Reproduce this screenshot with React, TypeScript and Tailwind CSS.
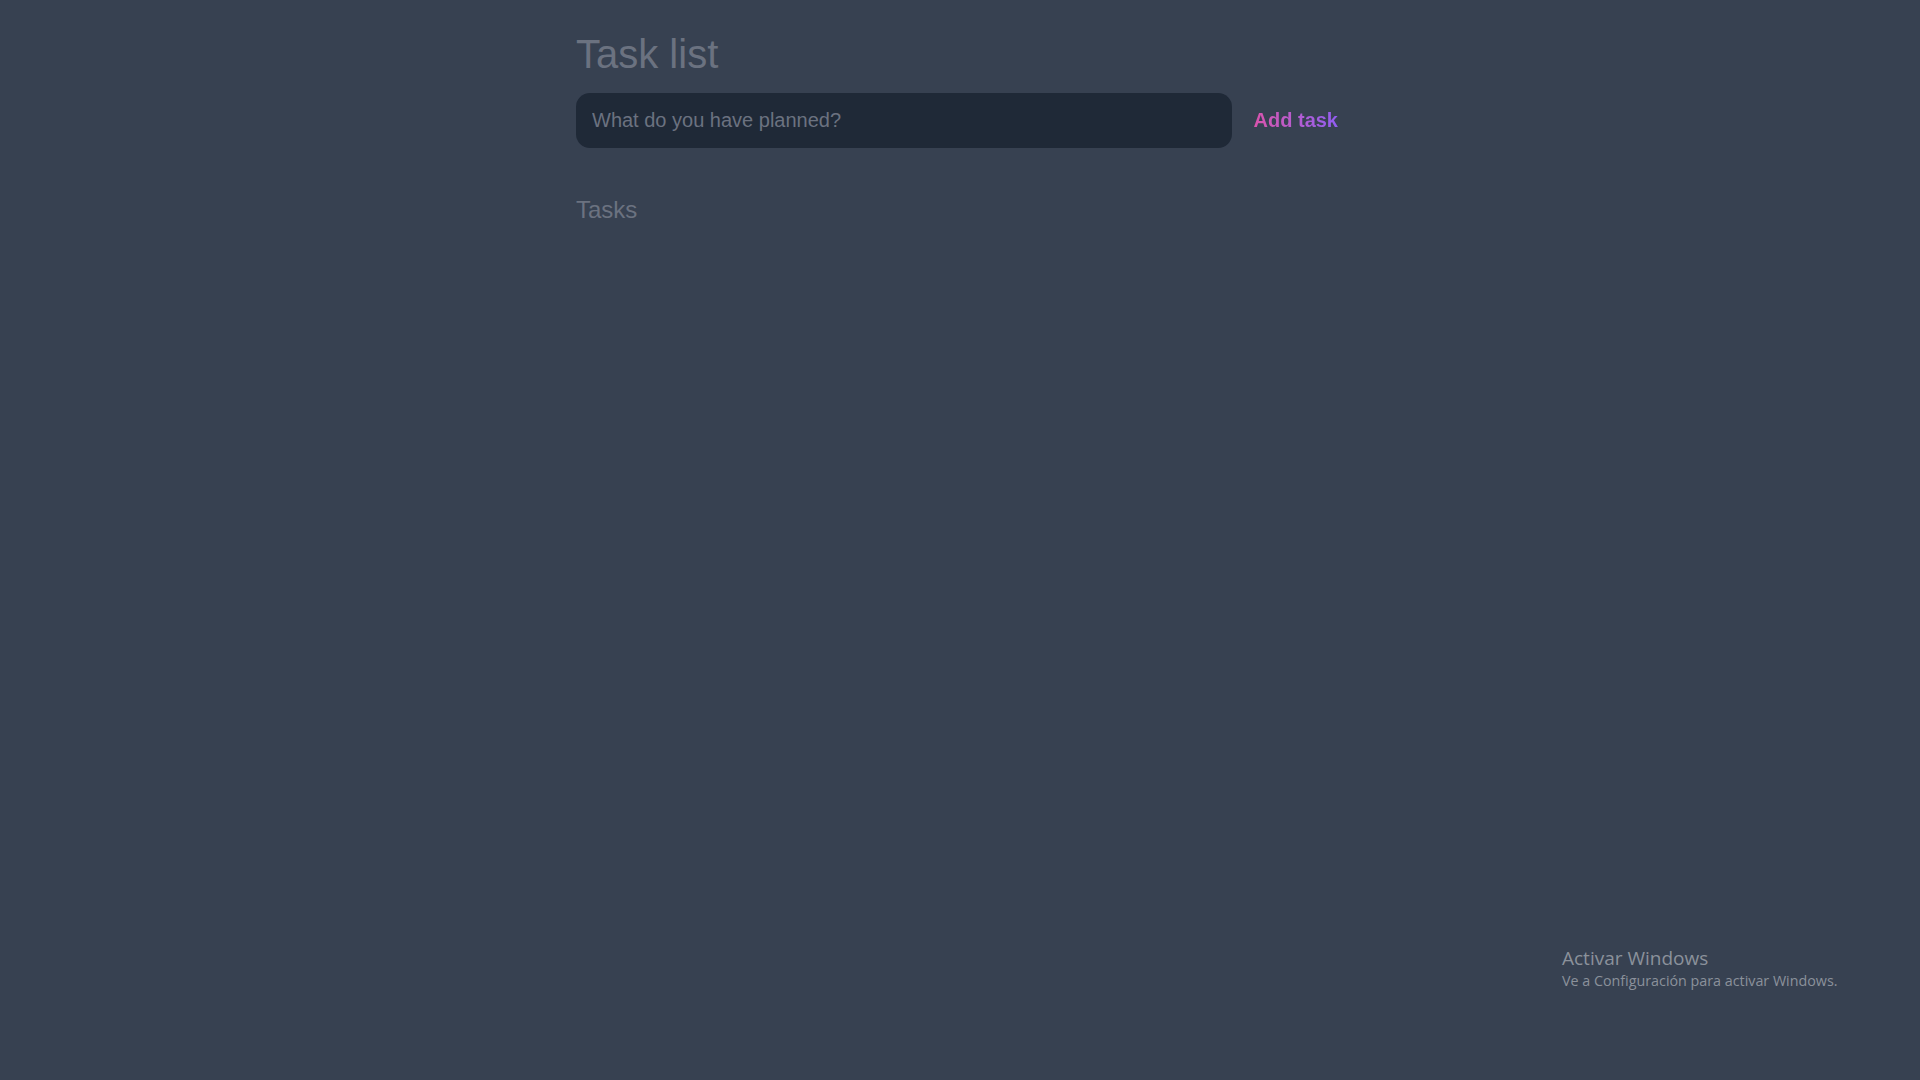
import { useState } from "react";

export default function App() {
  const [task, setTask] = useState("");
  const [tasks, setTasks] = useState<string[]>([]);

  const addTask = () => {
    if (!task.trim()) return;
    setTasks([...tasks, task.trim()]);
    setTask("");
  };

  return (
    <div
      className="relative min-h-screen bg-[#374151] text-[#6b7280]"
      style={{ fontFamily: '"Liberation Sans", Arial, sans-serif' }}
    >
      <main className="max-w-3xl mx-auto pt-[34px]">
        <h1 className="text-[40px] leading-none font-normal text-[#6b7280]">Task list</h1>

        <div className="flex items-center mt-[19px]">
          <input
            value={task}
            onChange={(e) => setTask(e.target.value)}
            onKeyDown={(e) => e.key === "Enter" && addTask()}
            placeholder="What do you have planned?"
            className="flex-1 h-[55px] rounded-[14px] bg-[#1f2937] px-4 text-xl text-gray-300 placeholder:text-[#6b7280] outline-none"
          />
          <button
            onClick={addTask}
            className="pl-[22px] pr-[6px] pb-[2px] text-xl font-bold bg-gradient-to-r from-[#ec4899] to-[#8b5cf6] bg-clip-text text-transparent"
          >
            Add task
          </button>
        </div>

        <h2 className="mt-[50px] text-2xl leading-none text-[#6b7280]">Tasks</h2>
        <ul className="mt-4 flex flex-col gap-2">
          {tasks.map((t, i) => (
            <li key={i} className="text-lg text-gray-300">
              {t}
            </li>
          ))}
        </ul>
      </main>

      {/* windows activation watermark */}
      <div
        className="absolute left-[1562px] top-[947px] text-[#8b919b] pointer-events-none"
        style={{ fontFamily: '"Open Sans", "Noto Sans", sans-serif' }}
      >
        <div className="text-[19px] leading-[23px]">Activar Windows</div>
        <div className="text-[14.3px] leading-[21px]">Ve a Configuración para activar Windows.</div>
      </div>
    </div>
  );
}
